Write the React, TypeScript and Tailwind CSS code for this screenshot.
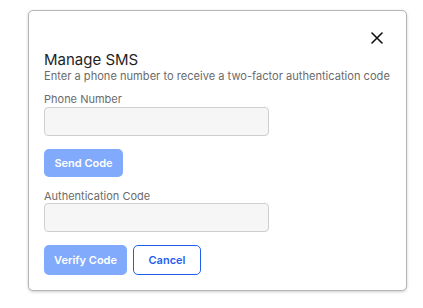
import React from "react";

export default function App() {
  return (
    <div className="w-[423px] h-[308px] bg-white" style={{ fontFamily: "Inter, 'Noto Sans', sans-serif" }}>
      <div className="pt-[10px] pl-[28px]">
        <div className="w-[379px] h-[281px] border border-[#b5b5b5] rounded-[5px] shadow-[0_1px_3px_rgba(0,0,0,0.2)] bg-white relative px-[15px]">
          <button className="absolute right-[22px] top-[20px] w-[14px] h-[14px] flex items-center justify-center text-[#111]">
            <svg width="12" height="12" viewBox="0 0 12 12" fill="none" stroke="currentColor" strokeWidth="1.6" strokeLinecap="round">
              <path d="M1 1L11 11M11 1L1 11" />
            </svg>
          </button>
          <div className="pt-[39px]">
            <div className="text-[15px] leading-[19px] text-[#1f1f1f]">Manage SMS</div>
            <div className="text-[11.1px] leading-[14px] text-[#6b6b6b]">Enter a phone number to receive a two-factor authentication code</div>
            <div className="text-[11px] leading-[14px] text-[#6b6b6b] mt-[9px]">Phone Number</div>
            <div className="w-[225px] h-[29px] mt-[1px] bg-[#f6f6f6] border border-[#cfcfcf] rounded-[4px]" />
            <button className="block mt-[13px] w-[79px] h-[28px] rounded-[5px] bg-[#82aafc] text-white text-[11px] font-semibold">Send Code</button>
            <div className="text-[11px] leading-[14px] text-[#6b6b6b] mt-[12px]">Authentication Code</div>
            <div className="w-[225px] h-[29px] bg-[#f6f6f6] border border-[#cfcfcf] rounded-[4px]" />
            <div className="flex gap-[6px] mt-[13px]">
              <button className="w-[83px] h-[30px] rounded-[5px] bg-[#82aafc] text-white text-[11px] font-semibold">Verify Code</button>
              <button className="w-[68px] h-[30px] rounded-[5px] border border-[#1f5ff0] bg-white text-[#1f5ff0] text-[11px] font-semibold">Cancel</button>
            </div>
          </div>
        </div>
      </div>
    </div>
  );
}
